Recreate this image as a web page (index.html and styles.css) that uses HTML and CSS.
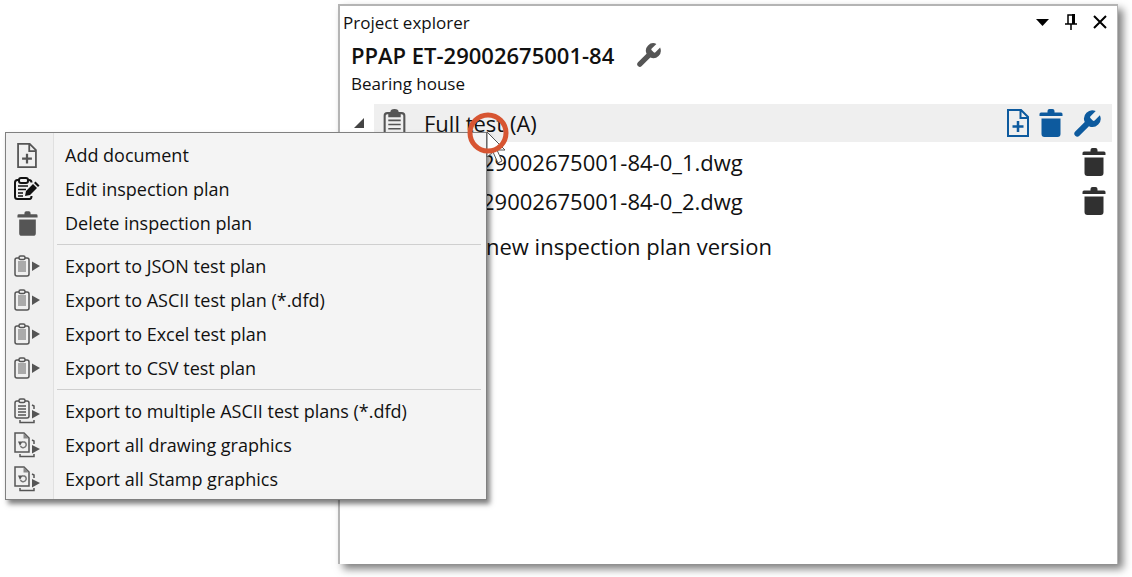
FILE: index.html
```
<!DOCTYPE html>
<html lang="en">
<head>
    <meta charset="UTF-8">
    <meta name="viewport" content="width=device-width, initial-scale=1.0">
    <title>Project explorer</title>
    <link rel="stylesheet" href="styles.css">
</head>
<body>

<!-- Shared icons -->
<svg class="icon-defs" aria-hidden="true">
    <symbol id="wrench" viewBox="2 1 21 21">
        <path fill="currentColor" d="M14.7 6.3a1 1 0 0 0 0 1.4l1.6 1.6a1 1 0 0 0 1.4 0l3.77-3.77a6 6 0 0 1-7.94 7.94l-6.91 6.91a2.12 2.12 0 0 1-3-3l6.91-6.91a6 6 0 0 1 7.94-7.94z"/>
    </symbol>
    <symbol id="trash" viewBox="0 0 24 28">
        <path fill="currentColor" d="M8.500 2q0-2 2-2h3q2 0 2 2v1.500H22q1.500 0 1.500 1.500v2H.5V5q0-1.500 1.500-1.500h6.500zM2.500 9.500h19V25q0 3-3 3h-13q-3 0-3-3z"/>
    </symbol>
    <symbol id="add-doc" viewBox="0 0 22 28">
        <path fill="none" stroke="currentColor" stroke-width="2" d="M1 1h13l7 7v19H1zM13.500 1v8H21"/>
        <path fill="none" stroke="currentColor" stroke-width="2.500" d="M11 12v11M5.500 17.500h11"/>
    </symbol>
    <symbol id="clipboard" viewBox="0 0 22 28">
        <rect x="1.500" y="4" width="19" height="23" rx="2.500" fill="none" stroke="currentColor" stroke-width="2"/>
        <path fill="currentColor" d="M5 8V5q0-2 2-2 0-3 4-3t4 3q2 0 2 2v3z"/>
        <path fill="none" stroke="currentColor" stroke-width="1.500" d="M5 11h12M5 15h12M5 19h12M5 23h12"/>
    </symbol>
    <symbol id="edit-plan" viewBox="0 0 26 24">
        <g fill="none" stroke="currentColor" stroke-width="2">
            <path d="M5 3H3.500Q1 3 1 5.500v14Q1 22 3.500 22h12q2 0 2-3M13 3h2q2.500 0 2.500 2.500"/>
            <rect x="5" y="1" width="9" height="5" rx="2"/>
        </g>
        <path fill="none" stroke="currentColor" stroke-width="1.500" d="M4 9h10M4 12.500h8M4 16h5M4 19h5"/>
        <path fill="currentColor" d="M11 19l1-5 7-7 4 4-7 7zM20 6l1.500-1.500 4 4L24 10z"/>
    </symbol>
    <symbol id="export-plan" viewBox="0 0 26 22">
        <g fill="none" stroke="currentColor" stroke-width="1.500">
            <path d="M5 3H3Q1 3 1 5v14q0 2 2 2h10q2 0 2-2V5q0-2-2-2h-2"/>
            <rect x="5" y="1" width="6" height="3.500" rx="1.500"/>
        </g>
        <path fill="#aaa" d="M4 6h8v11H4z"/>
        <path fill="currentColor" d="M18 6.500l8 4.500-8 5z"/>
    </symbol>
    <symbol id="export-multi" viewBox="0 0 26 26">
        <g fill="none" stroke="currentColor" stroke-width="1.500">
            <path d="M5 3H3Q1 3 1 5v13q0 2 2 2h10q2 0 2-2V5q0-2-2-2h-2M6 22v2.500h14V22M18 7l2 1v3"/>
            <rect x="5" y="1" width="6" height="3.500" rx="1.500"/>
            <path d="M4 8h8M4 11h8M4 14h8M4 17h8"/>
        </g>
        <path fill="currentColor" d="M18 12l8 4-8 4.500z"/>
    </symbol>
    <symbol id="export-drawing" viewBox="0 0 26 26">
        <path fill="none" stroke="currentColor" stroke-width="1.500" d="M1 1h9l5 5v14H1zM6 22v2.500h14V22M18 8l2 1v3"/>
        <path fill="none" stroke="#777" stroke-width="1.500" d="M8 10h2.500a3 3 0 1 1-4 4"/>
        <path fill="#888" d="M9.500 1v5.500H15z"/>
        <path fill="currentColor" d="M4 9.500h4.500L6 14zM18 13l8 4-8 4.500z"/>
    </symbol>
</svg>

<main class="explorer">
    <header class="title-bar">
        <span class="caption">Project explorer</span>
        <button class="window-btn" type="button" aria-label="Window options">
            <svg width="13" height="7" viewBox="0 0 13 7"><path d="M0 0h13L6.500 7z"/></svg>
        </button>
        <button class="window-btn" type="button" aria-label="Auto hide">
            <svg width="12" height="16" viewBox="0 0 12 16"><path fill="none" stroke="#000" stroke-width="1.500" d="M3 10V1h5M0 10h12M6 10v6"/><path d="M7 0h3v10H7z"/></svg>
        </button>
        <button class="window-btn" type="button" aria-label="Close">
            <svg width="14" height="14" viewBox="0 0 14 14"><path fill="none" stroke="#000" stroke-width="2" d="M1 1l12 12M13 1L1 13"/></svg>
        </button>
    </header>

    <section class="project">
        <div class="project-name">
            <h1>PPAP ET-29002675001-84</h1>
            <button class="icon-btn grey" type="button" aria-label="Project settings"><svg width="26" height="26"><use href="#wrench"/></svg></button>
        </div>
        <p>Bearing house</p>
    </section>

    <!-- Inspection plan tree -->
    <section class="tree">
        <div class="plan-row">
            <button class="expander" type="button" aria-label="Collapse"><svg width="10" height="10" viewBox="0 0 10 10"><path d="M10 0v10H0z"/></svg></button>
            <div class="plan">
                <svg class="plan-icon" width="23" height="29"><use href="#clipboard"/></svg>
                <span class="plan-name">Full test (A)</span>
                <button class="icon-btn blue" type="button" aria-label="Add document"><svg width="22" height="28"><use href="#add-doc"/></svg></button>
                <button class="icon-btn blue" type="button" aria-label="Delete plan"><svg width="24" height="28"><use href="#trash"/></svg></button>
                <button class="icon-btn blue" type="button" aria-label="Plan settings"><svg width="29" height="29"><use href="#wrench"/></svg></button>
            </div>
        </div>
        <div class="file-row">
            <span>29002675001-84-0_1.dwg</span>
            <button class="icon-btn dark" type="button" aria-label="Delete drawing 1"><svg width="24" height="28"><use href="#trash"/></svg></button>
        </div>
        <div class="file-row">
            <span>29002675001-84-0_2.dwg</span>
            <button class="icon-btn dark" type="button" aria-label="Delete drawing 2"><svg width="24" height="28"><use href="#trash"/></svg></button>
        </div>
        <div class="version-row">new inspection plan version</div>
    </section>
</main>

<!-- Context menu -->
<nav class="context-menu">
    <button class="menu-item" type="button"><span class="menu-icon"><svg width="20" height="25"><use href="#add-doc"/></svg></span>Add document</button>
    <button class="menu-item" type="button"><span class="menu-icon black"><svg width="26" height="24"><use href="#edit-plan"/></svg></span>Edit inspection plan</button>
    <button class="menu-item" type="button"><span class="menu-icon"><svg width="21" height="25"><use href="#trash"/></svg></span>Delete inspection plan</button>
    <hr>
    <button class="menu-item" type="button"><span class="menu-icon"><svg width="26" height="22"><use href="#export-plan"/></svg></span>Export to JSON test plan</button>
    <button class="menu-item" type="button"><span class="menu-icon"><svg width="26" height="22"><use href="#export-plan"/></svg></span>Export to ASCII test plan (*.dfd)</button>
    <button class="menu-item" type="button"><span class="menu-icon"><svg width="26" height="22"><use href="#export-plan"/></svg></span>Export to Excel test plan</button>
    <button class="menu-item" type="button"><span class="menu-icon"><svg width="26" height="22"><use href="#export-plan"/></svg></span>Export to CSV test plan</button>
    <hr>
    <button class="menu-item" type="button"><span class="menu-icon"><svg width="26" height="26"><use href="#export-multi"/></svg></span>Export to multiple ASCII test plans (*.dfd)</button>
    <button class="menu-item" type="button"><span class="menu-icon"><svg width="26" height="26"><use href="#export-drawing"/></svg></span>Export all drawing graphics</button>
    <button class="menu-item" type="button"><span class="menu-icon"><svg width="26" height="26"><use href="#export-drawing"/></svg></span>Export all Stamp graphics</button>
</nav>

<!-- Mouse pointer with click marker -->
<svg class="pointer" width="42" height="52" viewBox="0 0 42 52">
    <path fill="#fff" stroke="#555" d="M20 20v25l6-5 5 11 4-2-5-11h8z"/>
    <circle cx="21" cy="21" r="18" fill="none" stroke="#d75532" stroke-width="5"/>
</svg>

</body>
</html>
```
FILE: styles.css
```
* {
    box-sizing: border-box;
}
body {
    font-family: 'Open Sans', 'Noto Sans', sans-serif;
    background: white;
    color: #111;
    margin: 0;
    padding: 4px 14px 13px 338px;
    min-height: 100vh;
    display: flex;
}
button {
    font: inherit;
    color: inherit;
    background: none;
    border: none;
    padding: 0;
}
svg {
    display: block;
}
.icon-defs {
    position: absolute;
    width: 0;
    height: 0;
}
.explorer {
    flex: 1;
    background: white;
    border: 2px solid #b4b4b4;
    border-right-width: 1px;
    border-bottom: none;
    box-shadow: 5px 5px 8px rgba(0, 0, 0, 0.5);
}
.title-bar {
    display: flex;
    align-items: center;
    gap: 16px;
    height: 32px;
    padding: 0 10px 0 3px;
}
.caption {
    flex: 1;
    font-size: 17px;
}
.project {
    padding-left: 11px;
}
.project-name {
    display: flex;
    align-items: center;
    gap: 22px;
    height: 33px;
}
h1 {
    font-size: 22px;
    font-weight: 600;
    margin: 0;
}
.project p {
    font-size: 17px;
    line-height: 25px;
    margin: 0;
}
.grey {
    color: #555;
}
.blue {
    color: #0d5a9e;
}
.dark {
    color: #303030;
}
.tree {
    padding: 8px 5px 0 0;
    font-size: 22px;
}
.plan-row {
    display: flex;
    align-items: center;
    height: 38px;
}
.expander {
    width: 34px;
    padding-left: 14px;
    fill: #444;
}
.plan {
    flex: 1;
    display: flex;
    align-items: center;
    gap: 10px;
    height: 38px;
    padding: 0 10px 0 9px;
    background: #efefef;
}
.plan-icon {
    color: #555;
}
.plan-name {
    flex: 1;
    padding-left: 8px;
}
.file-row {
    display: flex;
    align-items: center;
    justify-content: space-between;
    height: 39px;
    padding: 0 6px 0 142px;
}
.version-row {
    padding-left: 146px;
    line-height: 52px;
}
.context-menu {
    position: absolute;
    left: 5px;
    top: 132px;
    width: 482px;
    padding: 5px 5px 3px 0;
    background: linear-gradient(to right, #f0f0f0 47px, #e0e0e0 47px, #e0e0e0 48px, #f4f4f4 48px);
    border: 1px solid #808080;
    box-shadow: 3px 4px 5px rgba(0, 0, 0, 0.5);
    font-size: 18px;
}
.menu-item {
    display: flex;
    align-items: center;
    width: 100%;
    height: 34px;
    text-align: left;
}
.menu-icon {
    display: flex;
    justify-content: center;
    width: 42px;
    margin-right: 17px;
    color: #555;
}
.black {
    color: #111;
}
hr {
    height: 1px;
    margin: 4px 0 4px 51px;
    border: none;
    background: #cfcfcf;
}
.pointer {
    position: absolute;
    left: 467px;
    top: 112px;
}
```
